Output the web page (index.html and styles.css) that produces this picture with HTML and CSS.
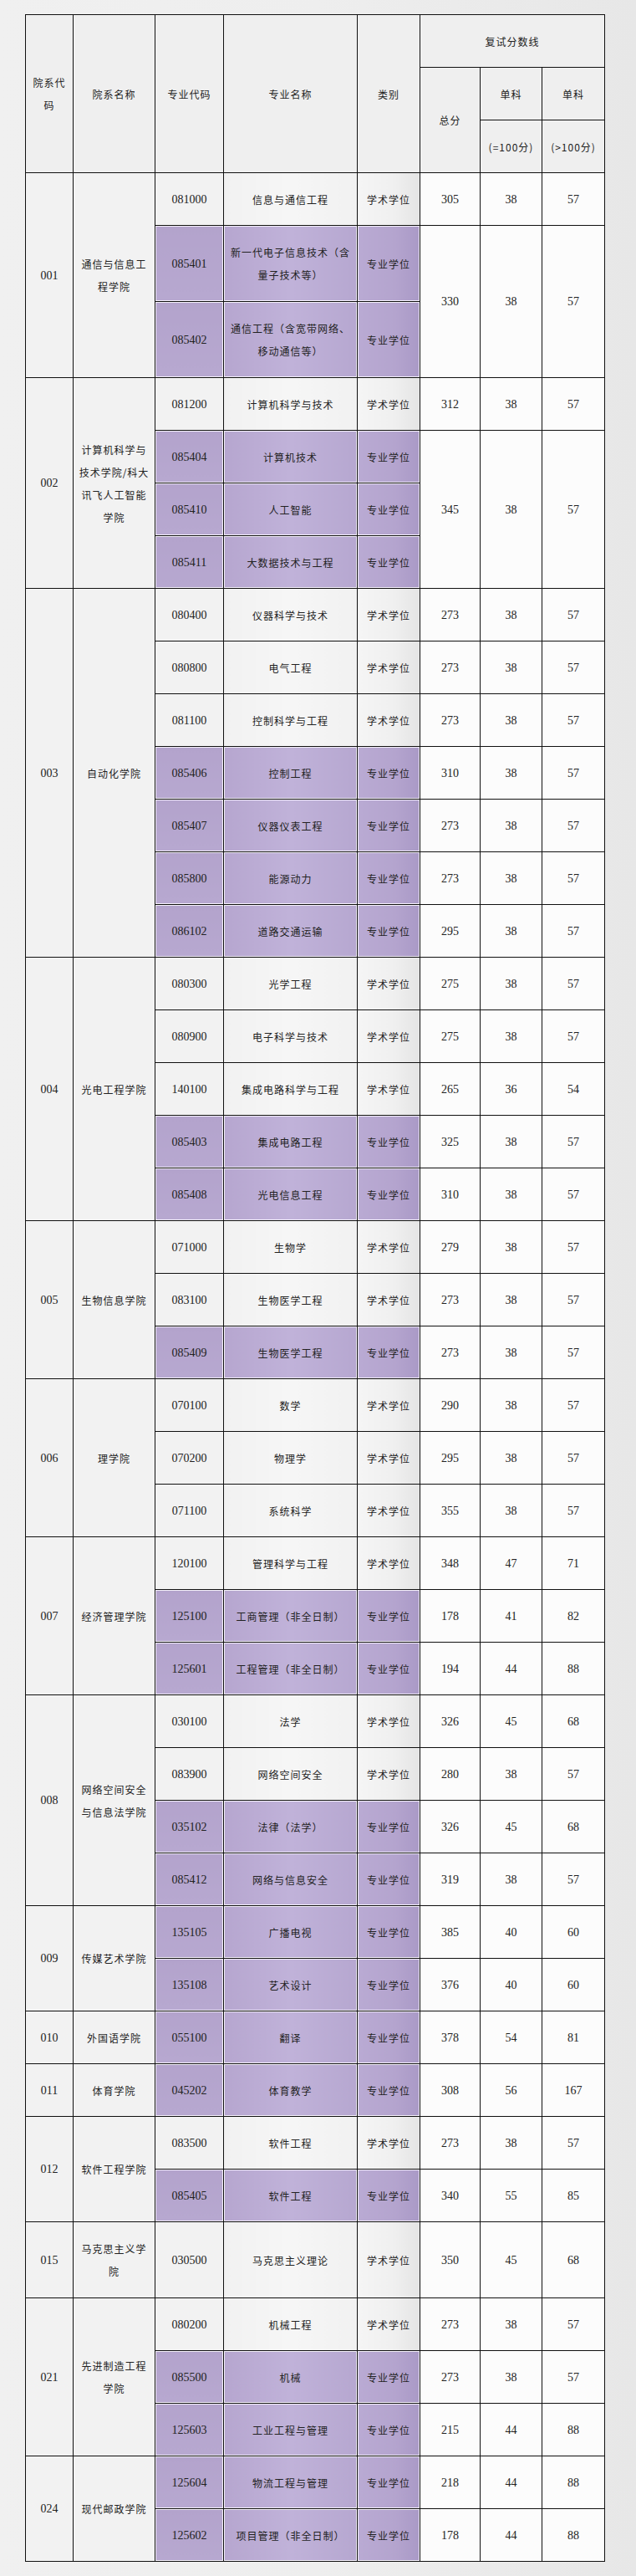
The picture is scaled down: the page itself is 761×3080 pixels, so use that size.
FILE: index.html
```html
<!DOCTYPE html>
<html lang="zh-CN">
<head>
<meta charset="utf-8">
<title>复试分数线</title>
<link rel="stylesheet" href="styles.css">
</head>
<body>
<div class="page">
<table class="grid">
  <colgroup>
    <col class="c1"><col class="c2"><col class="c3"><col class="c4"><col class="c5"><col class="c6"><col class="c7"><col class="c8">
  </colgroup>
  <thead>
    <tr class="r">
      <th rowspan="3" class="zh">院系代<br>码</th>
      <th rowspan="3" class="zh">院系名称</th>
      <th rowspan="3" class="zh">专业代码</th>
      <th rowspan="3" class="zh">专业名称</th>
      <th rowspan="3" class="zh">类别</th>
      <th colspan="3" class="zh">复试分数线</th>
    </tr>
    <tr class="r">
      <th rowspan="2" class="zh">总分</th>
      <th class="zh">单科</th>
      <th class="zh">单科</th>
    </tr>
    <tr class="r">
      <th class="zh">(=100分)</th>
      <th class="zh">(&gt;100分)</th>
    </tr>
  </thead>
  <tbody>
    <!-- 001 -->
    <tr class="r">
      <td rowspan="3" class="dept num">001</td>
      <td rowspan="3" class="dept zh">通信与信息工<br>程学院</td>
      <td class="code num">081000</td><td class="name zh">信息与通信工程</td><td class="type zh">学术学位</td>
      <td class="score num">305</td><td class="score num">38</td><td class="score num">57</td>
    </tr>
    <tr class="t">
      <td class="code p num">085401</td><td class="name p zh">新一代电子信息技术（含<br>量子技术等）</td><td class="type p zh">专业学位</td>
      <td rowspan="2" class="score num">330</td><td rowspan="2" class="score num">38</td><td rowspan="2" class="score num">57</td>
    </tr>
    <tr class="t">
      <td class="code p num">085402</td><td class="name p zh">通信工程（含宽带网络、<br>移动通信等）</td><td class="type p zh">专业学位</td>
    </tr>
    <!-- 002 -->
    <tr class="r">
      <td rowspan="4" class="dept num">002</td>
      <td rowspan="4" class="dept zh">计算机科学与<br>技术学院/科大<br>讯飞人工智能<br>学院</td>
      <td class="code num">081200</td><td class="name zh">计算机科学与技术</td><td class="type zh">学术学位</td>
      <td class="score num">312</td><td class="score num">38</td><td class="score num">57</td>
    </tr>
    <tr class="r">
      <td class="code p num">085404</td><td class="name p zh">计算机技术</td><td class="type p zh">专业学位</td>
      <td rowspan="3" class="score num">345</td><td rowspan="3" class="score num">38</td><td rowspan="3" class="score num">57</td>
    </tr>
    <tr class="r">
      <td class="code p num">085410</td><td class="name p zh">人工智能</td><td class="type p zh">专业学位</td>
    </tr>
    <tr class="r">
      <td class="code p num">085411</td><td class="name p zh">大数据技术与工程</td><td class="type p zh">专业学位</td>
    </tr>
    <!-- 003 -->
    <tr class="r">
      <td rowspan="7" class="dept num">003</td>
      <td rowspan="7" class="dept zh">自动化学院</td>
      <td class="code num">080400</td><td class="name zh">仪器科学与技术</td><td class="type zh">学术学位</td>
      <td class="score num">273</td><td class="score num">38</td><td class="score num">57</td>
    </tr>
    <tr class="r">
      <td class="code num">080800</td><td class="name zh">电气工程</td><td class="type zh">学术学位</td>
      <td class="score num">273</td><td class="score num">38</td><td class="score num">57</td>
    </tr>
    <tr class="r">
      <td class="code num">081100</td><td class="name zh">控制科学与工程</td><td class="type zh">学术学位</td>
      <td class="score num">273</td><td class="score num">38</td><td class="score num">57</td>
    </tr>
    <tr class="r">
      <td class="code p num">085406</td><td class="name p zh">控制工程</td><td class="type p zh">专业学位</td>
      <td class="score num">310</td><td class="score num">38</td><td class="score num">57</td>
    </tr>
    <tr class="r">
      <td class="code p num">085407</td><td class="name p zh">仪器仪表工程</td><td class="type p zh">专业学位</td>
      <td class="score num">273</td><td class="score num">38</td><td class="score num">57</td>
    </tr>
    <tr class="r">
      <td class="code p num">085800</td><td class="name p zh">能源动力</td><td class="type p zh">专业学位</td>
      <td class="score num">273</td><td class="score num">38</td><td class="score num">57</td>
    </tr>
    <tr class="r">
      <td class="code p num">086102</td><td class="name p zh">道路交通运输</td><td class="type p zh">专业学位</td>
      <td class="score num">295</td><td class="score num">38</td><td class="score num">57</td>
    </tr>
    <!-- 004 -->
    <tr class="r">
      <td rowspan="5" class="dept num">004</td>
      <td rowspan="5" class="dept zh">光电工程学院</td>
      <td class="code num">080300</td><td class="name zh">光学工程</td><td class="type zh">学术学位</td>
      <td class="score num">275</td><td class="score num">38</td><td class="score num">57</td>
    </tr>
    <tr class="r">
      <td class="code num">080900</td><td class="name zh">电子科学与技术</td><td class="type zh">学术学位</td>
      <td class="score num">275</td><td class="score num">38</td><td class="score num">57</td>
    </tr>
    <tr class="r">
      <td class="code num">140100</td><td class="name zh">集成电路科学与工程</td><td class="type zh">学术学位</td>
      <td class="score num">265</td><td class="score num">36</td><td class="score num">54</td>
    </tr>
    <tr class="r">
      <td class="code p num">085403</td><td class="name p zh">集成电路工程</td><td class="type p zh">专业学位</td>
      <td class="score num">325</td><td class="score num">38</td><td class="score num">57</td>
    </tr>
    <tr class="r">
      <td class="code p num">085408</td><td class="name p zh">光电信息工程</td><td class="type p zh">专业学位</td>
      <td class="score num">310</td><td class="score num">38</td><td class="score num">57</td>
    </tr>
    <!-- 005 -->
    <tr class="r">
      <td rowspan="3" class="dept num">005</td>
      <td rowspan="3" class="dept zh">生物信息学院</td>
      <td class="code num">071000</td><td class="name zh">生物学</td><td class="type zh">学术学位</td>
      <td class="score num">279</td><td class="score num">38</td><td class="score num">57</td>
    </tr>
    <tr class="r">
      <td class="code num">083100</td><td class="name zh">生物医学工程</td><td class="type zh">学术学位</td>
      <td class="score num">273</td><td class="score num">38</td><td class="score num">57</td>
    </tr>
    <tr class="r">
      <td class="code p num">085409</td><td class="name p zh">生物医学工程</td><td class="type p zh">专业学位</td>
      <td class="score num">273</td><td class="score num">38</td><td class="score num">57</td>
    </tr>
    <!-- 006 -->
    <tr class="r">
      <td rowspan="3" class="dept num">006</td>
      <td rowspan="3" class="dept zh">理学院</td>
      <td class="code num">070100</td><td class="name zh">数学</td><td class="type zh">学术学位</td>
      <td class="score num">290</td><td class="score num">38</td><td class="score num">57</td>
    </tr>
    <tr class="r">
      <td class="code num">070200</td><td class="name zh">物理学</td><td class="type zh">学术学位</td>
      <td class="score num">295</td><td class="score num">38</td><td class="score num">57</td>
    </tr>
    <tr class="r">
      <td class="code num">071100</td><td class="name zh">系统科学</td><td class="type zh">学术学位</td>
      <td class="score num">355</td><td class="score num">38</td><td class="score num">57</td>
    </tr>
    <!-- 007 -->
    <tr class="r">
      <td rowspan="3" class="dept num">007</td>
      <td rowspan="3" class="dept zh">经济管理学院</td>
      <td class="code num">120100</td><td class="name zh">管理科学与工程</td><td class="type zh">学术学位</td>
      <td class="score num">348</td><td class="score num">47</td><td class="score num">71</td>
    </tr>
    <tr class="r">
      <td class="code p num">125100</td><td class="name p zh">工商管理（非全日制）</td><td class="type p zh">专业学位</td>
      <td class="score num">178</td><td class="score num">41</td><td class="score num">82</td>
    </tr>
    <tr class="r">
      <td class="code p num">125601</td><td class="name p zh">工程管理（非全日制）</td><td class="type p zh">专业学位</td>
      <td class="score num">194</td><td class="score num">44</td><td class="score num">88</td>
    </tr>
    <!-- 008 -->
    <tr class="r">
      <td rowspan="4" class="dept num">008</td>
      <td rowspan="4" class="dept zh">网络空间安全<br>与信息法学院</td>
      <td class="code num">030100</td><td class="name zh">法学</td><td class="type zh">学术学位</td>
      <td class="score num">326</td><td class="score num">45</td><td class="score num">68</td>
    </tr>
    <tr class="r">
      <td class="code num">083900</td><td class="name zh">网络空间安全</td><td class="type zh">学术学位</td>
      <td class="score num">280</td><td class="score num">38</td><td class="score num">57</td>
    </tr>
    <tr class="r">
      <td class="code p num">035102</td><td class="name p zh">法律（法学）</td><td class="type p zh">专业学位</td>
      <td class="score num">326</td><td class="score num">45</td><td class="score num">68</td>
    </tr>
    <tr class="r">
      <td class="code p num">085412</td><td class="name p zh">网络与信息安全</td><td class="type p zh">专业学位</td>
      <td class="score num">319</td><td class="score num">38</td><td class="score num">57</td>
    </tr>
    <!-- 009 -->
    <tr class="r">
      <td rowspan="2" class="dept num">009</td>
      <td rowspan="2" class="dept zh">传媒艺术学院</td>
      <td class="code p num">135105</td><td class="name p zh">广播电视</td><td class="type p zh">专业学位</td>
      <td class="score num">385</td><td class="score num">40</td><td class="score num">60</td>
    </tr>
    <tr class="r">
      <td class="code p num">135108</td><td class="name p zh">艺术设计</td><td class="type p zh">专业学位</td>
      <td class="score num">376</td><td class="score num">40</td><td class="score num">60</td>
    </tr>
    <!-- 010 -->
    <tr class="r">
      <td class="dept num">010</td>
      <td class="dept zh">外国语学院</td>
      <td class="code p num">055100</td><td class="name p zh">翻译</td><td class="type p zh">专业学位</td>
      <td class="score num">378</td><td class="score num">54</td><td class="score num">81</td>
    </tr>
    <!-- 011 -->
    <tr class="r">
      <td class="dept num">011</td>
      <td class="dept zh">体育学院</td>
      <td class="code p num">045202</td><td class="name p zh">体育教学</td><td class="type p zh">专业学位</td>
      <td class="score num">308</td><td class="score num">56</td><td class="score num">167</td>
    </tr>
    <!-- 012 -->
    <tr class="r">
      <td rowspan="2" class="dept num">012</td>
      <td rowspan="2" class="dept zh">软件工程学院</td>
      <td class="code num">083500</td><td class="name zh">软件工程</td><td class="type zh">学术学位</td>
      <td class="score num">273</td><td class="score num">38</td><td class="score num">57</td>
    </tr>
    <tr class="r">
      <td class="code p num">085405</td><td class="name p zh">软件工程</td><td class="type p zh">专业学位</td>
      <td class="score num">340</td><td class="score num">55</td><td class="score num">85</td>
    </tr>
    <!-- 015 -->
    <tr class="t">
      <td class="dept num">015</td>
      <td class="dept zh">马克思主义学<br>院</td>
      <td class="code num">030500</td><td class="name zh">马克思主义理论</td><td class="type zh">学术学位</td>
      <td class="score num">350</td><td class="score num">45</td><td class="score num">68</td>
    </tr>
    <!-- 021 -->
    <tr class="r">
      <td rowspan="3" class="dept num">021</td>
      <td rowspan="3" class="dept zh">先进制造工程<br>学院</td>
      <td class="code num">080200</td><td class="name zh">机械工程</td><td class="type zh">学术学位</td>
      <td class="score num">273</td><td class="score num">38</td><td class="score num">57</td>
    </tr>
    <tr class="r">
      <td class="code p num">085500</td><td class="name p zh">机械</td><td class="type p zh">专业学位</td>
      <td class="score num">273</td><td class="score num">38</td><td class="score num">57</td>
    </tr>
    <tr class="r">
      <td class="code p num">125603</td><td class="name p zh">工业工程与管理</td><td class="type p zh">专业学位</td>
      <td class="score num">215</td><td class="score num">44</td><td class="score num">88</td>
    </tr>
    <!-- 024 -->
    <tr class="r">
      <td rowspan="2" class="dept num">024</td>
      <td rowspan="2" class="dept zh">现代邮政学院</td>
      <td class="code p num">125604</td><td class="name p zh">物流工程与管理</td><td class="type p zh">专业学位</td>
      <td class="score num">218</td><td class="score num">44</td><td class="score num">88</td>
    </tr>
    <tr class="r">
      <td class="code p num">125602</td><td class="name p zh">项目管理（非全日制）</td><td class="type p zh">专业学位</td>
      <td class="score num">178</td><td class="score num">44</td><td class="score num">88</td>
    </tr>
  </tbody>
</table>
</div>
</body>
</html>
```
FILE: styles.css
```css
html, body {
  margin: 0;
  padding: 0;
}
body {
  min-height: 3080px;
  background: linear-gradient(90deg, #f0f0f0 0%, #eeeeee 50%, #e7e7e7 100%);
  font-family: "Liberation Serif", "Noto Sans CJK SC", serif;
  color: #222222;
  -webkit-font-smoothing: antialiased;
}
.page {
  padding: 17px 0 0 30px;
}
.grid {
  border-collapse: collapse;
  table-layout: fixed;
  width: 693px;
  border: 1px solid #111;
}
.c1 { width: 57px; }
.c2 { width: 98px; }
.c3 { width: 82px; }
.c4 { width: 160px; }
.c5 { width: 75px; }
.c6 { width: 72px; }
.c7 { width: 74px; }
.c8 { width: 75px; }

.grid th, .grid td {
  border: 1px solid #111;
  padding: 0 2px;
  text-align: center;
  vertical-align: middle;
  font-weight: normal;
  color: #222222;
}
.grid tr.r { height: 63px; }
.grid tr.t { height: 91px; }

.zh {
  font-family: "Noto Sans CJK SC", sans-serif;
  font-size: 12px;
  font-weight: 400;
  letter-spacing: 1px;
  line-height: 27px;
}
.num {
  font-family: "Liberation Serif", serif;
  font-size: 14px;
  line-height: 27px;
}
th.zh { background: #efefef; }

.dept { background: #f2f2f2; }
.code { background: #f2f2f2; }
.name { background: linear-gradient(90deg, #f1f1f1 0%, #f6f6f6 50%, #f1f1f1 100%); }
.type { background: linear-gradient(90deg, #f5f5f5 0%, #efefef 60%, #e4e4e4 100%); }
.score { background: #fcfcfc; }

.code.p {
  background: linear-gradient(180deg, #b3a3cc 0%, #b7a8d0 100%);
  box-shadow: inset 0 0 0 1px #f4f0fa;
}
.name.p {
  background: linear-gradient(90deg, #b6a6cf 0%, #c0b2d9 50%, #b6a7d0 100%);
  box-shadow: inset 0 0 0 1px #f4f0fa;
}
.type.p {
  background: linear-gradient(90deg, #b9aad3 0%, #b4a4ce 60%, #a999c6 100%);
  box-shadow: inset 0 0 0 1px #f4f0fa;
}
```
